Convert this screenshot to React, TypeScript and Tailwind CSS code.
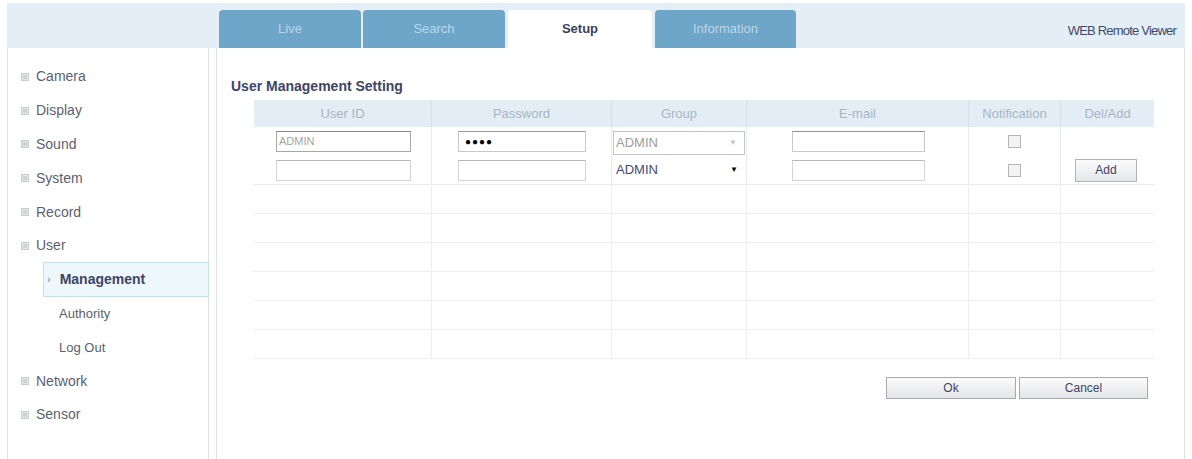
import React from "react";

const menu = ["Camera", "Display", "Sound", "System", "Record", "User"];
const menuAfter = ["Network", "Sensor"];

const tabs = [
  { name: "Live", w: "w-[142px]", active: false },
  { name: "Search", w: "w-[142px]", active: false },
  { name: "Setup", w: "w-[144px]", active: true },
  { name: "Information", w: "w-[141px]", active: false },
];

const cols = [
  { name: "User ID" },
  { name: "Password" },
  { name: "Group" },
  { name: "E-mail" },
  { name: "Notification" },
  { name: "Del/Add" },
];

function Bullet() {
  return (
    <svg width="8" height="8" viewBox="0 0 8 8" className="shrink-0">
      <rect x="0.5" y="0.5" width="7" height="7" fill="#e4e7ea" stroke="#c9cdd2" />
      <line x1="2" y1="3" x2="6" y2="3" stroke="#b8bdc3" />
      <line x1="2" y1="5" x2="6" y2="5" stroke="#b8bdc3" />
    </svg>
  );
}

function MenuItem({ label }: { label: string }) {
  return (
    <div className="h-[33.8px] flex items-center gap-[7px] pl-[13px] text-[14px] text-[#5b5f72]">
      <Bullet />
      <span>{label}</span>
    </div>
  );
}

function Checkbox() {
  return <div className="w-[13px] h-[13px] border border-[#b5b5b5] bg-[#f3f3f3]" />;
}

export default function App() {
  return (
    <div
      className="w-[1192px] h-[459px] bg-white pt-[3px] px-[7px] overflow-hidden"
      style={{ fontFamily: '"Liberation Sans", Arial, sans-serif' }}
    >
      {/* top bar */}
      <div className="flex h-[45px] bg-[#e4eef6]">
        <div className="w-[212px] shrink-0" />
        <div className="flex items-end gap-[2px]">
          {tabs.map((t) => (
            <div
              key={t.name}
              className={
                t.active
                  ? `${t.w} h-[38px] mx-[1px] rounded-t-[4px] bg-white flex items-center justify-center text-[13px] font-bold text-[#3b3f5c]`
                  : `${t.w} h-[38px] rounded-t-[4px] bg-[#6ea6c9] flex items-center justify-center text-[13px] text-[#b9d7ea]`
              }
            >
              {t.name}
            </div>
          ))}
        </div>
        <div className="flex-1 flex items-center justify-end pt-[10px] pr-[9px] text-[13px] tracking-[-0.8px] text-[#3c4a6a]">
          WEB Remote Viewer
        </div>
      </div>

      <div className="flex h-[411px]">
        {/* sidebar */}
        <div className="w-[202px] shrink-0 border-l border-r border-[#dfe3e7] pt-[12px]">
          {menu.map((m) => (
            <MenuItem key={m} label={m} />
          ))}
          <div className="h-[33.8px] flex items-center">
            <div className="ml-[35px] mr-[-1px] flex-1 h-[35px] bg-[#eef7fb] border border-[#c7e0ec] flex items-center gap-[9px] pl-[3px] text-[14px] font-bold text-[#3d4466]">
              <span className="text-[11px] text-[#8aa9c0] font-bold">›</span>
              <span>Management</span>
            </div>
          </div>
          <div className="h-[33.8px] flex items-center pl-[51px] text-[13px] text-[#5b5f72]">Authority</div>
          <div className="h-[33.8px] flex items-center pl-[51px] text-[13px] text-[#5b5f72]">Log Out</div>
          {menuAfter.map((m) => (
            <MenuItem key={m} label={m} />
          ))}
        </div>

        {/* content */}
        <div className="ml-[7px] flex-1 border-l border-r border-[#dfe3e7] pl-[14px]">
          <div className="h-[52px] flex items-end pb-[3px] text-[14px] font-bold text-[#3d4466]">
            User Management Setting
          </div>
          <div className="ml-[23px] w-[900px]">
            {/* header */}
            <div className="grid grid-cols-[178px_180px_135px_222px_92px_93px] h-[27px] bg-[#e3edf5]">
              {cols.map((c, i) => (
                <div
                  key={c.name}
                  className={`flex items-center justify-center text-[13px] text-[#a6b6c6] ${
                    i < cols.length - 1 ? "border-r border-[#d3e0ea]" : ""
                  }`}
                >
                  {c.name}
                </div>
              ))}
            </div>

            {/* row 1 */}
            <div className="grid grid-cols-[178px_180px_135px_222px_92px_93px] h-[29px]">
              <div className="flex items-center pl-[22px] border-r border-[#e9ecee]">
                <div className="w-[135px] h-[21px] border border-[#a8a8a8] border-t-[#8c8c8c] flex items-center pl-[2px] text-[11px] text-[#a3a3a3]">
                  ADMIN
                </div>
              </div>
              <div className="flex items-center pl-[26px] border-r border-[#e9ecee]">
                <div className="w-[128px] h-[21px] border border-[#c8c8c8] border-t-[#9a9a9a] flex items-center pl-[6px] text-[10px] tracking-[1px] text-black">
                  ●●●●
                </div>
              </div>
              <div className="flex items-center pl-[1px] border-r border-[#e9ecee]">
                <div className="w-[132px] h-[24px] mt-[2px] border border-[#c4c4c4] flex items-center justify-between pl-[2px] pr-[7px] text-[13px] text-[#9c9c9c]">
                  <span>ADMIN</span>
                  <span className="text-[8px] text-[#c2c2c2]">▼</span>
                </div>
              </div>
              <div className="flex items-center pl-[45px] border-r border-[#e9ecee]">
                <div className="w-[133px] h-[21px] border border-[#c8c8c8] border-t-[#8f8f8f]" />
              </div>
              <div className="flex items-center justify-center border-r border-[#e9ecee]">
                <Checkbox />
              </div>
              <div />
            </div>

            {/* row 2 */}
            <div className="grid grid-cols-[178px_180px_135px_222px_92px_93px] h-[29px] border-b border-[#e9ecee]">
              <div className="flex items-center pl-[22px] border-r border-[#e9ecee]">
                <div className="w-[135px] h-[21px] border border-[#d4d4d4] border-t-[#b8b8b8]" />
              </div>
              <div className="flex items-center pl-[26px] border-r border-[#e9ecee]">
                <div className="w-[128px] h-[21px] border border-[#d4d4d4] border-t-[#b8b8b8]" />
              </div>
              <div className="flex items-center pl-[1px] border-r border-[#e9ecee]">
                <div className="w-[132px] h-[24px] flex items-center justify-between pl-[3px] pr-[7px] text-[13px] text-[#414b78]">
                  <span>ADMIN</span>
                  <span className="text-[8px] text-black">▼</span>
                </div>
              </div>
              <div className="flex items-center pl-[45px] border-r border-[#e9ecee]">
                <div className="w-[133px] h-[21px] border border-[#d4d4d4] border-t-[#b8b8b8]" />
              </div>
              <div className="flex items-center justify-center border-r border-[#e9ecee]">
                <Checkbox />
              </div>
              <div className="flex items-center pl-[14px]">
                <div className="w-[62px] h-[23px] border border-[#b4b4b4] bg-gradient-to-b from-[#fbfbfb] to-[#e6e7ea] flex items-center justify-center text-[12px] text-[#3d4466]">
                  Add
                </div>
              </div>
            </div>

            {/* empty rows */}
            {[0, 1, 2, 3, 4, 5].map((r) => (
              <div
                key={r}
                className="grid grid-cols-[178px_180px_135px_222px_92px_93px] h-[29px] border-b border-[#eceef0]"
              >
                <div className="border-r border-[#eceef0]" />
                <div className="border-r border-[#eceef0]" />
                <div className="border-r border-[#eceef0]" />
                <div className="border-r border-[#eceef0]" />
                <div className="border-r border-[#eceef0]" />
                <div />
              </div>
            ))}

            {/* buttons */}
            <div className="flex justify-end gap-[3px] pr-[6px] mt-[18px]">
              <div className="w-[130px] h-[22px] border border-[#a9a9a9] bg-gradient-to-b from-[#fbfbfb] to-[#e4e5e8] flex items-center justify-center text-[12px] text-[#3d4466]">
                Ok
              </div>
              <div className="w-[129px] h-[22px] border border-[#a9a9a9] bg-gradient-to-b from-[#fbfbfb] to-[#e4e5e8] flex items-center justify-center text-[12px] text-[#3d4466]">
                Cancel
              </div>
            </div>
          </div>
        </div>
      </div>
    </div>
  );
}
